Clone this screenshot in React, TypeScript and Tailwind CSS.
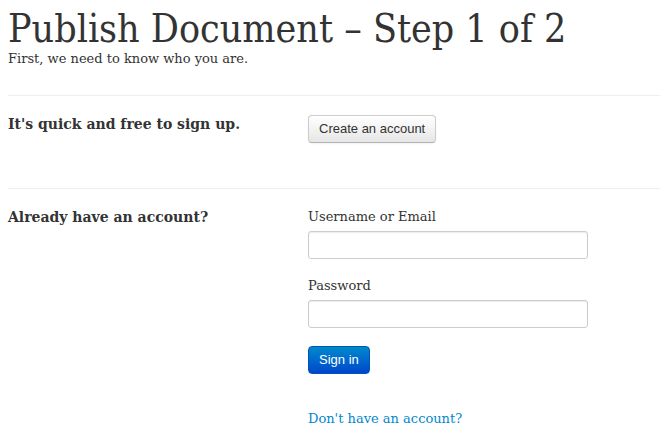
import React from 'react';

const serif = 'font-["DejaVu_Serif",serif]';
const sans = 'font-["Liberation_Sans",Arial,sans-serif]';

function Field({ label }: { label: string }) {
  return (
    <div className="flex flex-col">
      <label className="text-[13px] leading-[20px] text-[#333]">{label}</label>
      <input
        type="text"
        className="mt-[4px] h-[28px] w-[280px] rounded-[3px] border border-[#ccc] bg-white px-[6px] shadow-[inset_0_1px_1px_rgba(0,0,0,0.075)] outline-none"
      />
    </div>
  );
}

export default function App() {
  return (
    <main className={`min-h-screen bg-white pl-2 text-[#333] ${serif}`}>
      <header className="pt-[9px]">
        <h1 className='font-["DejaVu_Serif_Condensed","DejaVu_Serif",serif] text-[39px] leading-[40px] text-[#333] [font-stretch:condensed]'>
          Publish Document – Step 1 of 2
        </h1>
        <p className="mt-[1px] text-[13px] leading-[18px]">
          First, we need to know who you are.
        </p>
      </header>

      <hr className="mt-[27px] border-t border-[#eee]" />

      <section className="grid grid-cols-[300px_1fr] pt-[19px] pb-[45px]">
        <h2 className="-mt-[1px] text-[14px] font-bold leading-[20px]">
          It's quick and free to sign up.
        </h2>
        <div>
          <button
            className={`h-[28px] rounded-[4px] border border-[#ccc] border-b-[#b3b3b3] bg-gradient-to-b from-white to-[#e6e6e6] px-[10px] text-[13px] text-[#333] shadow-[inset_0_1px_0_rgba(255,255,255,0.2),0_1px_2px_rgba(0,0,0,0.05)] ${sans}`}
          >
            Create an account
          </button>
        </div>
      </section>

      <hr className="border-t border-[#eee]" />

      <section className="grid grid-cols-[300px_1fr] pt-[18px]">
        <h2 className="text-[14px] font-bold leading-[20px]">
          Already have an account?
        </h2>
        <form className="flex flex-col">
          <Field label="Username or Email" />
          <div className="mt-[17px]">
            <Field label="Password" />
          </div>
          <div className="mt-[18px]">
            <button
              type="button"
              className={`h-[28px] rounded-[4px] border border-[#0055b3] bg-gradient-to-b from-[#0088cc] to-[#0044cc] px-[10px] text-[13px] text-white ${sans}`}
            >
              Sign in
            </button>
          </div>
          <a href="#" className="mt-[35px] text-[13px] leading-[20px] text-[#0088cc]">
            Don't have an account?
          </a>
        </form>
      </section>
    </main>
  );
}
